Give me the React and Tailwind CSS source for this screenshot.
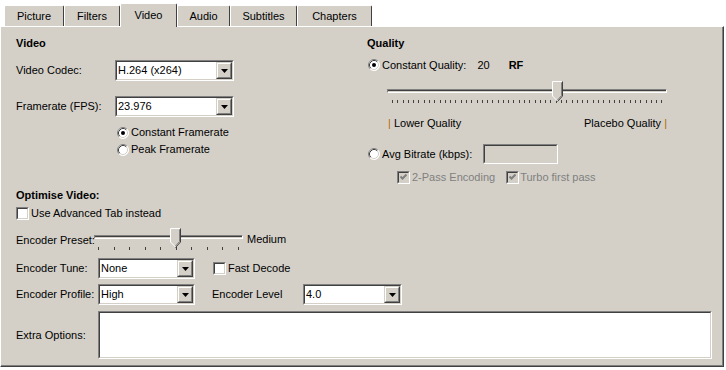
import React from "react";

const sunkenOuter = "border border-t-[#808080] border-l-[#808080] border-b-white border-r-white";
const sunkenInner = "border border-t-[#404040] border-l-[#404040] border-b-[#d4d0c8] border-r-[#d4d0c8]";

function DropBtn() {
  return (
    <div className="w-[16px] h-full border border-t-[#d4d0c8] border-l-[#d4d0c8] border-b-[#404040] border-r-[#404040]">
      <div className="w-full h-full flex items-center justify-center bg-[#d4d0c8] border border-t-white border-l-white border-b-[#808080] border-r-[#808080]">
        <svg width="7" height="4" viewBox="0 0 7 4">
          <path d="M0 0 H7 L3.5 4 Z" fill="#000" />
        </svg>
      </div>
    </div>
  );
}

function Combo({ w, value }) {
  return (
    <div className={`${w} h-[21px] shrink-0 ${sunkenOuter}`}>
      <div className={`h-full flex items-center bg-white ${sunkenInner}`}>
        <span className="flex-1 pl-[1px] whitespace-nowrap">{value}</span>
        <DropBtn />
      </div>
    </div>
  );
}

function Radio({ checked }) {
  return (
    <svg width="12" height="12" viewBox="0 0 12 12" className="shrink-0">
      <circle cx="6" cy="6" r="5.5" fill="#fff" />
      <path d="M2.11 9.89 A5.5 5.5 0 0 1 9.89 2.11" stroke="#808080" fill="none" />
      <path d="M9.89 2.11 A5.5 5.5 0 0 1 2.11 9.89" stroke="#ffffff" fill="none" />
      <path d="M2.82 9.18 A4.5 4.5 0 0 1 9.18 2.82" stroke="#404040" fill="none" />
      <path d="M9.18 2.82 A4.5 4.5 0 0 1 2.82 9.18" stroke="#d4d0c8" fill="none" />
      {checked && <circle cx="6" cy="6" r="2" fill="#000" />}
    </svg>
  );
}

function Check({ checked, disabled }) {
  return (
    <div className={`w-[13px] h-[13px] shrink-0 ${sunkenOuter}`}>
      <div className={`w-full h-full flex items-center justify-center ${sunkenInner} ${disabled ? "bg-[#d4d0c8]" : "bg-white"}`}>
        {checked && (
          <svg width="7" height="7" viewBox="0 0 7 7">
            <path d="M0.5 2.5 L2.5 4.5 L6.5 0.5" stroke={disabled ? "#808080" : "#000"} strokeWidth="2" fill="none" />
          </svg>
        )}
      </div>
    </div>
  );
}

function Thumb({ h }) {
  const b = h - 6;
  return (
    <svg width="11" height={h} viewBox={`0 0 11 ${h}`}>
      <path d={`M0.5 0.5 H10.5 V${b} L5.5 ${h - 0.5} L0.5 ${b} Z`} fill="#d4d0c8" />
      <path d={`M5.5 ${h - 1} L0.5 ${b} V0.5 H10`} stroke="#ffffff" fill="none" />
      <path d={`M10.5 0.5 V${b} L5.5 ${h - 0.5}`} stroke="#404040" fill="none" />
      <path d={`M9.5 1.5 V${b - 0.5} L5.5 ${h - 2}`} stroke="#808080" fill="none" />
    </svg>
  );
}

function Track() {
  return (
    <div className="h-[4px] border border-t-[#808080] border-l-[#808080] border-b-white border-r-white">
      <div className="h-[1px] bg-[#404040]" />
    </div>
  );
}

function Tab({ label, w, selected }) {
  if (selected) {
    return (
      <div className={`${w} h-[24px] -mb-[1px] relative z-10 bg-[#d4d0c8] border-t border-l border-r border-t-white border-l-white border-r-[#404040] rounded-t-[2px] flex items-center justify-center`}>
        {label}
      </div>
    );
  }
  return (
    <div className={`${w} h-[21px] bg-[#d4d0c8] border-t border-l border-r border-t-white border-l-white border-r-[#404040] rounded-t-[2px] flex items-center justify-center`}>
      {label}
    </div>
  );
}

export default function App() {
  const qTicks = Array.from({ length: 52 });
  const pTicks = Array.from({ length: 10 });
  return (
    <div className="w-[726px] h-[370px] bg-white overflow-hidden font-['Liberation_Sans',Arial,sans-serif] text-[11px] leading-[13px] text-black whitespace-nowrap">
      <div className="flex items-end h-[26px] pl-[4px]">
        <Tab label="Picture" w="w-[60px]" />
        <Tab label="Filters" w="w-[56px]" />
        <Tab label="Video" w="w-[57px]" selected />
        <Tab label="Audio" w="w-[53px]" />
        <Tab label="Subtitles" w="w-[67px]" />
        <Tab label="Chapters" w="w-[75px]" />
      </div>
      <div className="w-[724px] h-[341px] bg-[#d4d0c8] border border-t-white border-l-white border-r-[#404040] border-b-[#404040]">
        <div className="h-full flex flex-col border-r border-b border-r-[#808080] border-b-[#808080]">
          {/* Top section */}
          <div className="flex h-[157px]">
            <div className="w-[366px] pl-[15px] flex flex-col">
              <div className="mt-[9px] h-[14px] leading-[14px] font-bold">Video</div>
              <div className="mt-[10px] flex items-center h-[21px]">
                <div className="w-[99px]">Video Codec:</div>
                <Combo w="w-[119px]" value="H.264 (x264)" />
              </div>
              <div className="mt-[15px] flex items-center h-[21px]">
                <div className="w-[99px]">Framerate (FPS):</div>
                <Combo w="w-[119px]" value="23.976" />
              </div>
              <div className="mt-[7px] ml-[101px] flex items-center h-[17px] gap-[2px]">
                <Radio checked />
                <span>Constant Framerate</span>
              </div>
              <div className="ml-[101px] flex items-center h-[17px] gap-[2px]">
                <Radio />
                <span>Peak Framerate</span>
              </div>
            </div>
            <div className="flex-1 flex flex-col">
              <div className="mt-[9px] h-[14px] leading-[14px] font-bold">Quality</div>
              <div className="mt-[7px] h-[16px] flex items-center">
                <div className="ml-[1px]"><Radio checked /></div>
                <span className="ml-[2px]">Constant Quality:</span>
                <span className="ml-[11px]">20</span>
                <span className="ml-[19px] font-bold">RF</span>
              </div>
              <div className="mt-[8px] ml-[20px] w-[280px] h-[24px] relative">
                <div className="absolute left-0 right-0 top-[8px]"><Track /></div>
                <div className="absolute left-[5px] w-[271px] top-[19px] h-[3px] flex justify-between">
                  {qTicks.map((_, i) => (
                    <div key={i} className="w-[1px] h-[3px] bg-[#404040]" />
                  ))}
                </div>
                <div className="absolute left-[165px] top-0"><Thumb h={21} /></div>
              </div>
              <div className="mt-[11px] ml-[20px] w-[280px] h-[14px] flex items-center justify-between">
                <span className="ml-[1px]"><span className="text-[#b86a00]">|</span> Lower Quality</span>
                <span>Placebo Quality <span className="text-[#b86a00]">|</span></span>
              </div>
              <div className="mt-[14px] h-[20px] flex items-center">
                <div className="ml-[1px]"><Radio /></div>
                <span className="ml-[2px] w-[101px]">Avg Bitrate (kbps):</span>
                <div className={`w-[75px] h-[20px] ${sunkenOuter}`}>
                  <div className={`h-full bg-[#d4d0c8] ${sunkenInner}`} />
                </div>
              </div>
              <div className="mt-[6px] h-[14px] flex items-center text-[#808080]">
                <div className="ml-[30px]"><Check checked disabled /></div>
                <span className="ml-[2px]">2-Pass Encoding</span>
                <div className="ml-[11px]"><Check checked disabled /></div>
                <span className="ml-[1px]">Turbo first pass</span>
              </div>
            </div>
          </div>
          {/* Bottom section */}
          <div className="pl-[15px] flex flex-col">
            <div className="mt-[4px] h-[14px] leading-[14px] font-bold">Optimise Video:</div>
            <div className="mt-[4px] h-[14px] flex items-center">
              <Check />
              <span className="ml-[2px]">Use Advanced Tab instead</span>
            </div>
            <div className="mt-[8px] h-[22px] flex items-start">
              <div className="w-[78px] shrink-0 mt-[6px]">Encoder Preset:</div>
              <div className="w-[149px] h-[22px] shrink-0 relative">
                <div className="absolute left-0 right-0 top-[7px]"><Track /></div>
                <div className="absolute left-[4px] w-[141px] top-[19px] h-[3px] flex justify-between">
                  {pTicks.map((_, i) => (
                    <div key={i} className="w-[1px] h-[3px] bg-[#404040]" />
                  ))}
                </div>
                <div className="absolute left-[76px] top-0"><Thumb h={20} /></div>
              </div>
              <div className="ml-[4px] mt-[5px]">Medium</div>
            </div>
            <div className="mt-[8px] h-[21px] flex items-center">
              <div className="w-[82px] shrink-0">Encoder Tune:</div>
              <Combo w="w-[97px]" value="None" />
              <div className="ml-[18px]"><Check /></div>
              <span className="ml-[2px]">Fast Decode</span>
            </div>
            <div className="mt-[5px] h-[21px] flex items-center">
              <div className="w-[82px] shrink-0">Encoder Profile:</div>
              <Combo w="w-[97px]" value="High" />
              <div className="ml-[17px] w-[91px] shrink-0">Encoder Level</div>
              <Combo w="w-[99px]" value="4.0" />
            </div>
            <div className="mt-[6px] h-[48px] flex items-center">
              <div className="w-[82px] shrink-0">Extra Options:</div>
              <div className={`w-[614px] h-[48px] shrink-0 ${sunkenOuter}`}>
                <div className={`h-full bg-white ${sunkenInner}`} />
              </div>
            </div>
          </div>
        </div>
      </div>
    </div>
  );
}
